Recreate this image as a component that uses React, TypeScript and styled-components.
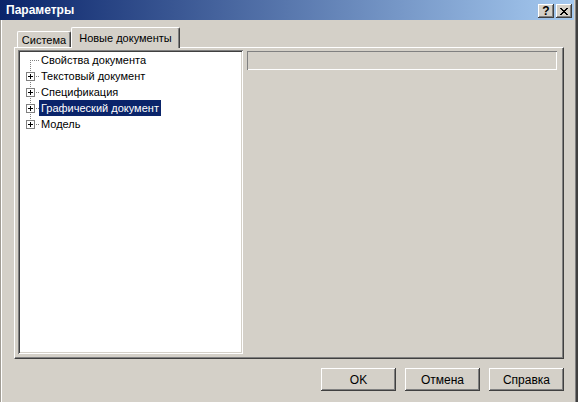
import * as React from 'react'
import styled, { createGlobalStyle } from 'styled-components'

const face = '#d4d0c8'

const GlobalStyle = createGlobalStyle`
  html, body {
    margin: 0;
    padding: 0;
    background: ${face};
  }
  body {
    font-family: "Liberation Sans", Arial, sans-serif;
    font-size: 11px;
    color: #000;
  }
`

interface ITreeItem {
  label: string
  box: boolean
  selected?: boolean
}

const items: ITreeItem[] = [
  { label: 'Свойства документа', box: false },
  { label: 'Текстовый документ', box: true },
  { label: 'Спецификация', box: true },
  { label: 'Графический документ', box: true, selected: true },
  { label: 'Модель', box: true }
]

// dotted tree connector with optional plus box
const Connector = ({ box, top, bottom }: { box: boolean; top: boolean; bottom: boolean }) => {
  const pts: [number, number][] = []
  const y0 = top ? 0 : 8
  const y1 = bottom ? 15 : 8
  for (let y = y0; y <= y1; y += 2) pts.push([10, y])
  for (let x = box ? 16 : 12; x <= 18; x += 2) pts.push([x, 8])

  return (
    <svg width={19} height={16} shapeRendering="crispEdges">
      {pts.map(([x, y]) => (
        <rect key={`${x}-${y}`} x={x} y={y} width={1} height={1} fill="#808080" />
      ))}
      {box && (
        <>
          <rect x={6.5} y={4.5} width={8} height={8} fill="#fff" stroke="#808080" />
          <rect x={8} y={8} width={5} height={1} fill="#000" />
          <rect x={10} y={6} width={1} height={5} fill="#000" />
        </>
      )}
    </svg>
  )
}

const CloseGlyph = () => (
  <svg width={8} height={7} shapeRendering="crispEdges">
    <path
      fill="#000"
      d="M0 0h2v1H0zM6 0h2v1H6zM1 1h2v1H1zM5 1h2v1H5zM2 2h4v1H2zM3 3h2v1H3zM2 4h4v1H2zM1 5h2v1H1zM5 5h2v1H5zM0 6h2v1H0zM6 6h2v1H6z"
    />
  </svg>
)

class App extends React.Component<{}, {}> {
  public render() {
    return (
      <>
        <GlobalStyle />
        <Window>
          <TitleBar>
            <Title>Параметры</Title>
            <TitleButtons>
              <TitleButton>?</TitleButton>
              <TitleButton>
                <CloseGlyph />
              </TitleButton>
            </TitleButtons>
          </TitleBar>
          <Main>
            <TabStrip>
              <Tab $width={54}>Система</Tab>
              <Tab $width={109} $active>
                Новые документы
              </Tab>
            </TabStrip>
            <Panel>
              <Tree>
                {items.map((item, i) => (
                  <Row key={item.label}>
                    <Connector box={item.box} top={i > 0} bottom={i < items.length - 1} />
                    <Label $selected={item.selected}>{item.label}</Label>
                  </Row>
                ))}
              </Tree>
              <Etched />
            </Panel>
            <Buttons>
              <Button>OK</Button>
              <Button>Отмена</Button>
              <Button>Справка</Button>
            </Buttons>
          </Main>
        </Window>
      </>
    )
  }
}

const Window = styled.div`
  width: 578px;
  height: 402px;
  overflow: hidden;
  background: ${face};

  /* window frame */
  box-shadow: inset 1px 0 0 #a09c94, inset 2px 0 0 #fff, inset -1px 0 0 #404040,
    inset -2px 0 0 #404040, inset -3px 0 0 #808080;

  /* flex parent */
  display: flex;
  flex-direction: column;
`

const TitleBar = styled.div`
  height: 20px;
  margin-right: 4px;
  padding: 0 2px 0 6px;
  background: linear-gradient(to right, #0a246a, #a6caf0);

  /* flex parent */
  display: flex;
  align-items: center;
`

const Title = styled.div`
  color: #fff;
  font-weight: bold;
  font-size: 12px;
`

const TitleButtons = styled.div`
  margin-left: auto;
  align-self: flex-end;
  padding-bottom: 2px;

  /* flex parent */
  display: flex;
  gap: 2px;
`

const TitleButton = styled.div`
  width: 16px;
  height: 14px;
  box-sizing: border-box;
  background: ${face};
  box-shadow: inset -1px -1px 0 #404040, inset 1px 1px 0 #fff, inset -2px -2px 0 #808080;
  font-weight: bold;
  font-size: 12px;
  line-height: 14px;

  /* flex parent */
  display: flex;
  align-items: center;
  justify-content: center;
`

const Main = styled.div`
  flex: 1;
  padding: 7px 14px 0;
  display: flex;
  flex-direction: column;
`

const TabStrip = styled.div`
  height: 20px;
  padding-left: 3px;
  display: flex;
  align-items: flex-end;
`

const Tab = styled.div<{ $width: number; $active?: boolean }>`
  position: relative;
  z-index: ${p => (p.$active ? 1 : 0)};
  width: ${p => p.$width}px;
  height: ${p => (p.$active ? 21 : 16)}px;
  margin-bottom: ${p => (p.$active ? -1 : 0)}px;
  box-sizing: border-box;
  background: ${face};
  border-top: 1px solid #fff;
  border-left: 1px solid #fff;
  border-right: 1px solid #404040;
  border-radius: 2px 2px 0 0;
  box-shadow: inset -1px 0 0 #808080;
  white-space: nowrap;

  /* flex parent */
  display: flex;
  align-items: center;
  justify-content: center;
`

const Panel = styled.div`
  height: 312px;
  box-sizing: border-box;
  border-top: 1px solid #fff;
  border-left: 1px solid #fff;
  border-right: 1px solid #404040;
  border-bottom: 1px solid #404040;
  box-shadow: inset -1px -1px 0 #808080;
  padding: 2px 3px;

  /* flex parent */
  display: flex;
  align-items: flex-start;
  gap: 4px;
`

const Tree = styled.div`
  width: 225px;
  height: 304px;
  box-sizing: border-box;
  padding: 2px;
  background: #fff;
  box-shadow: inset 1px 1px 0 #808080, inset -1px -1px 0 #fff, inset 2px 2px 0 #404040,
    inset -2px -2px 0 ${face};
`

const Row = styled.div`
  height: 16px;
  display: flex;
  align-items: center;
`

const Label = styled.span<{ $selected?: boolean }>`
  height: 16px;
  line-height: 16px;
  padding: 0 2px;
  white-space: nowrap;
  background: ${p => (p.$selected ? '#0a246a' : 'transparent')};
  color: ${p => (p.$selected ? '#fff' : '#000')};
`

const Etched = styled.div`
  width: 310px;
  height: 19px;
  margin-top: 1px;
  box-sizing: border-box;
  box-shadow: inset 1px 1px 0 #808080, inset -1px -1px 0 #fff;
`

const Buttons = styled.div`
  margin-top: 9px;
  display: flex;
  justify-content: flex-end;
  gap: 9px;
`

const Button = styled.div`
  width: 75px;
  height: 23px;
  box-sizing: border-box;
  background: ${face};
  box-shadow: inset -1px -1px 0 #404040, inset 1px 1px 0 #fff, inset -2px -2px 0 #808080;
  font-size: 12px;

  /* flex parent */
  display: flex;
  align-items: center;
  justify-content: center;
`

export default App
